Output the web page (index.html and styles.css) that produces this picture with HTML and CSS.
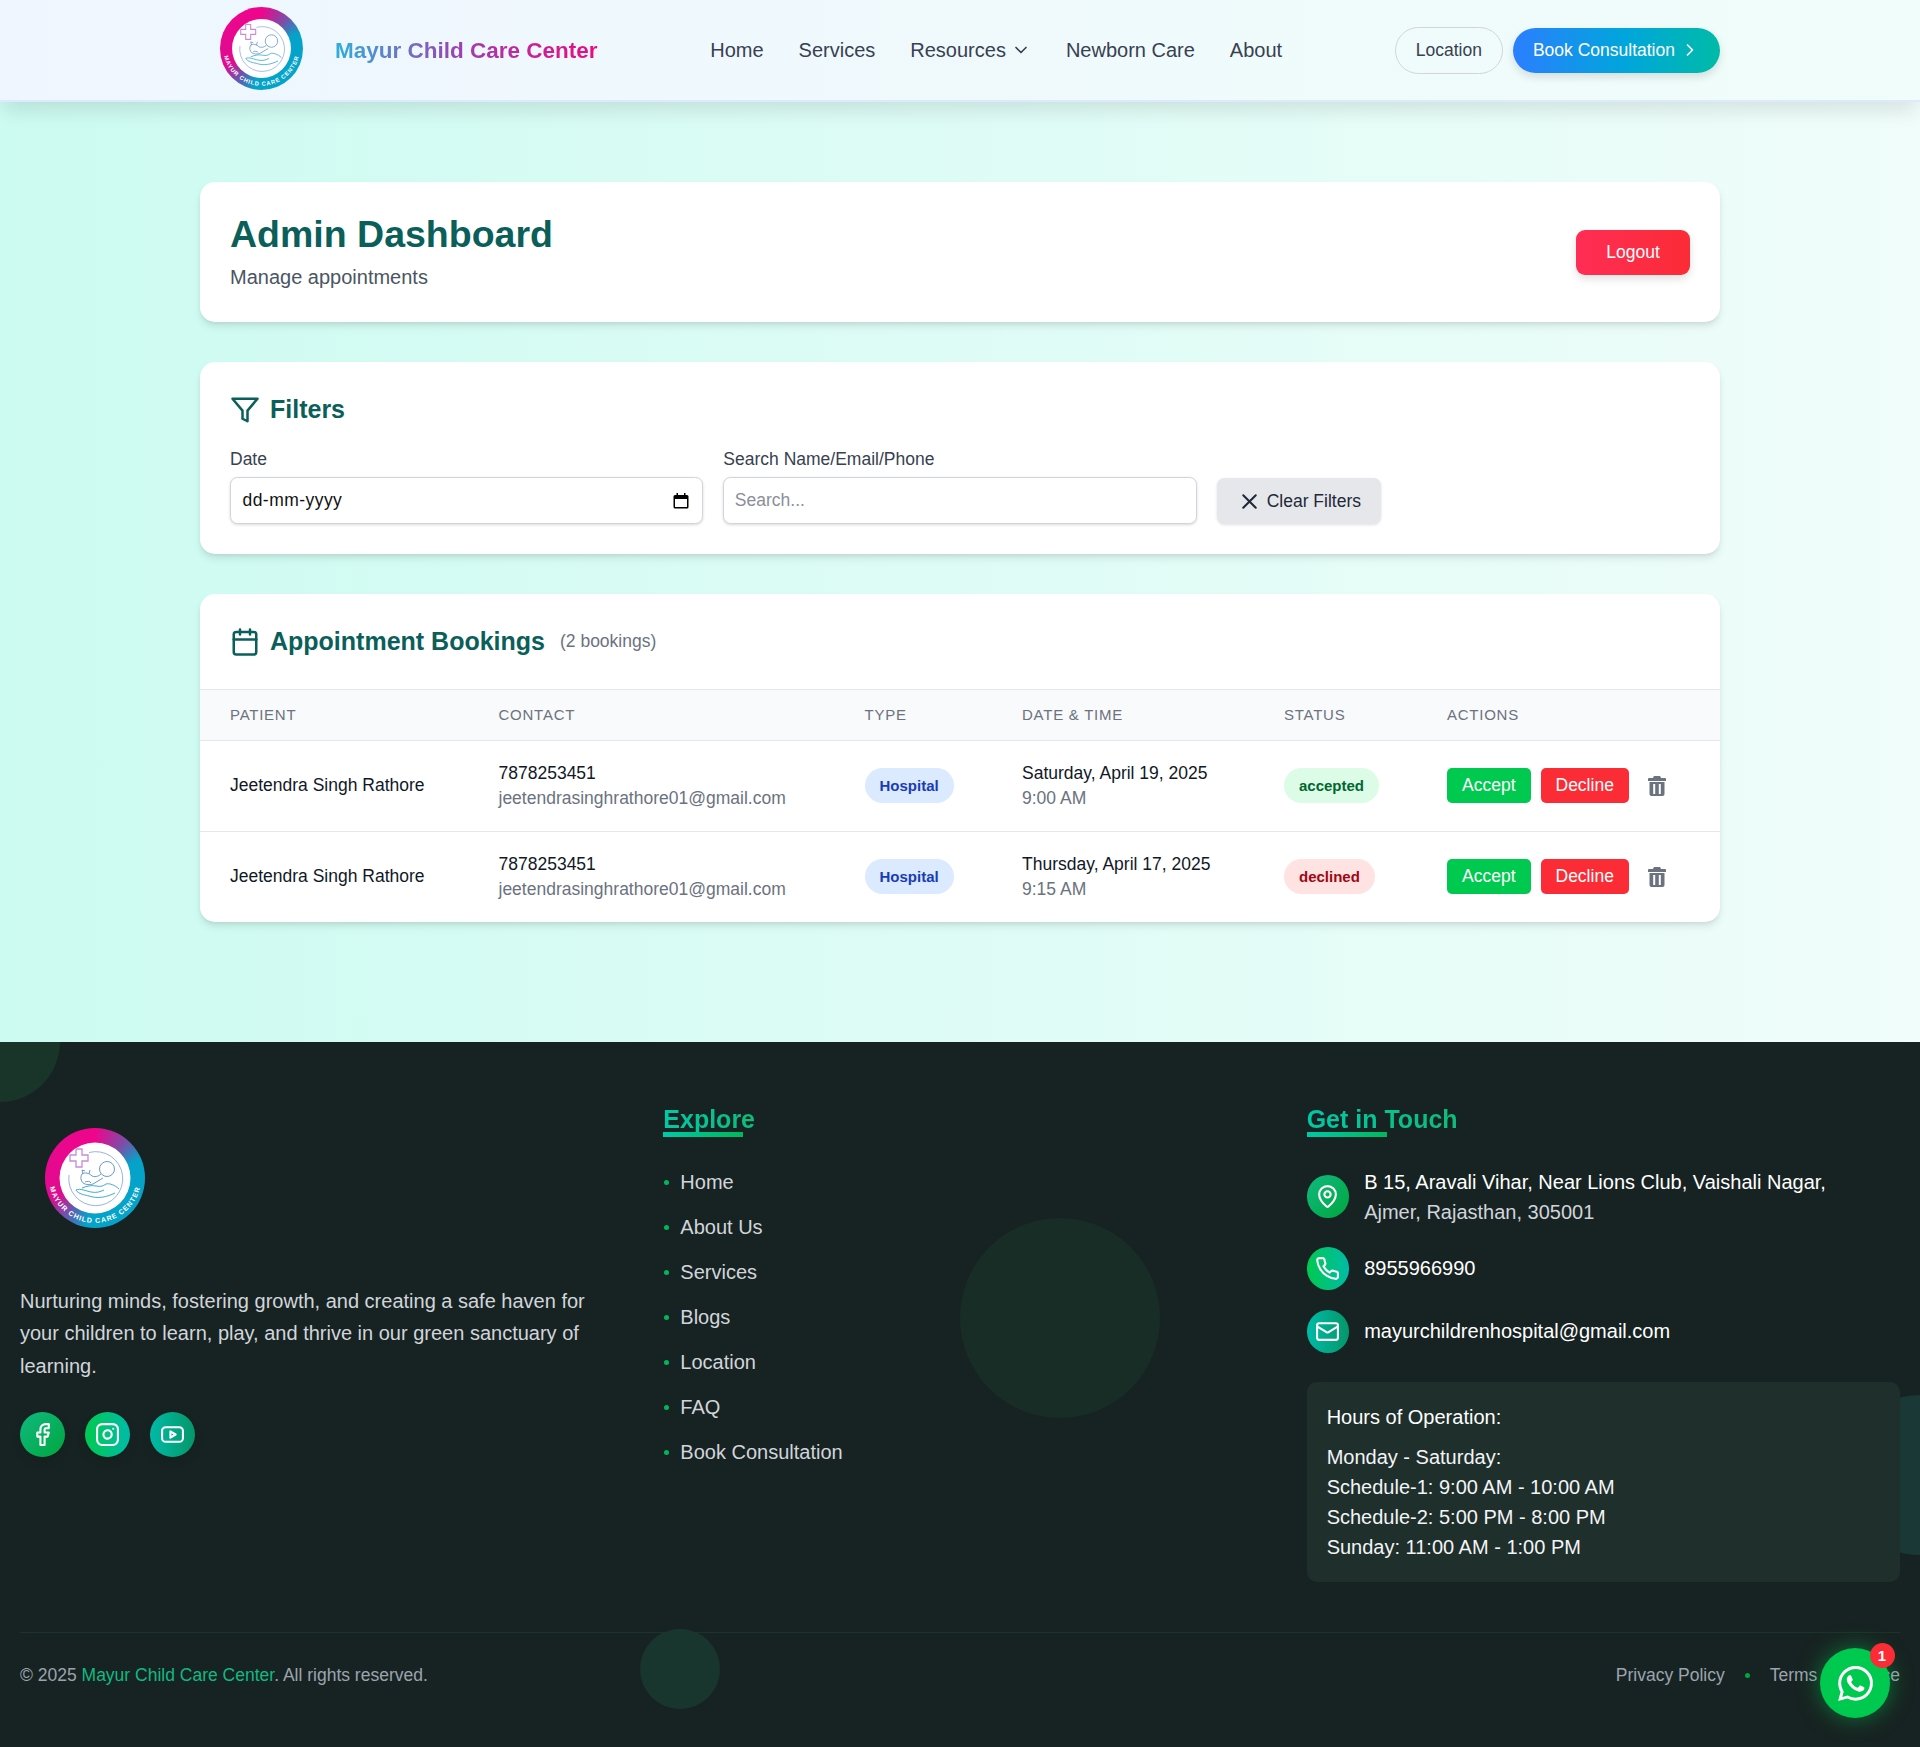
FILE: index.html
```html
<!doctype html>
<html lang="en-US">

<head>
    <meta charset="utf-8" />
    <title>Admin Dashboard - Mayur Child Care Center</title>

    <link rel="stylesheet" href="styles.css">
</head>

<body>
    <svg class="sprite" width="0" height="0">
        <symbol id="logo-art" viewBox="0 0 100 100">
            <circle cx="50" cy="50" r="35.5" fill="#fff" />
            <path d="M44 24.500A27 27 0 1 1 24 47" fill="none" stroke="#7f9fd6" stroke-width=".8" />
            <path d="M31 21h6v6h6v6h-6v6h-6v-6h-6v-6h6z" fill="#fff" stroke="#c98ad6" stroke-width="1.300" />
            <g fill="none" stroke="#5a8fc8" stroke-width=".9">
                <circle cx="62" cy="41" r="7.500" />
                <path d="M56 46c-3 3-7 3-9 2-3-3-7-4-10-2-2 3-1 7 1 9 3 2 7 2 10 1 3-2 7-4 10-6" />
                <path d="M38 46l-1-4 3 1M44 46l1-4" />
                <path d="M40 54c2-1 5-1 6 1" />
                <path d="M37 60c5-2 10-3 14-2 5 1 7 0 10-2 3-1 9 1 13 5" stroke="#2aa3c9" />
                <path d="M31 62c2 4 9 5 13 6 9 3 18 1 26-3" stroke="#2aa3c9" />
                <path d="M31 62c4-2 10 1 15 2 5 1 9 0 13-2" stroke="#2aa3c9" />
            </g>
            <path id="logo-arc" d="M4.500 58A46.500 46.500 0 0 0 95.500 58" fill="none" />
            <text class="logo-text">
                <textPath href="#logo-arc" startOffset="50%" text-anchor="middle">MAYUR CHILD CARE CENTER</textPath>
            </text>
        </symbol>
    </svg>

    <header class="site-header">
        <div class="header-inner">
            <a class="brand" href="#">
                <span class="logo logo-small"><svg viewBox="0 0 100 100"><use href="#logo-art" /></svg></span>
                <span class="brand-name">Mayur Child Care Center</span>
            </a>
            <nav class="main-nav">
                <a href="#">Home</a>
                <a href="#">Services</a>
                <a href="#" class="has-menu">Resources
                    <svg class="icon-chevron" viewBox="0 0 24 24"><path d="m6 9 6 6 6-6" /></svg>
                </a>
                <a href="#">Newborn Care</a>
                <a href="#">About</a>
            </nav>
            <div class="header-actions">
                <a href="#" class="btn-location">Location</a>
                <a href="#" class="btn-book">Book Consultation
                    <svg class="icon-chevron" viewBox="0 0 24 24"><path d="m9 18 6-6-6-6" /></svg>
                </a>
            </div>
        </div>
    </header>

    <main class="page">
        <section class="card title-card">
            <div>
                <h1>Admin Dashboard</h1>
                <p>Manage appointments</p>
            </div>
            <button class="btn-logout">Logout</button>
        </section>

        <section class="card filter-card">
            <h2 class="card-title">
                <svg class="icon" viewBox="0 0 24 24"><polygon points="22 3 2 3 10 12.460 10 19 14 21 14 12.460 22 3" /></svg>
                Filters
            </h2>
            <div class="filter-grid">
                <div>
                    <label>Date</label>
                    <div class="field date-field">
                        <span>dd-mm-yyyy</span>
                        <svg class="date-icon" viewBox="0 0 16 16"><path fill-rule="evenodd" d="M3.500 0v2H2a1.500 1.500 0 0 0-1.500 1.500V14A1.500 1.500 0 0 0 2 15.500h12a1.500 1.500 0 0 0 1.500-1.500V3.500A1.500 1.500 0 0 0 14 2h-1.500V0H11v2H5V0zM2 6h12v8H2z" /></svg>
                    </div>
                </div>
                <div>
                    <label for="search">Search Name/Email/Phone</label>
                    <input class="field" id="search" type="text" placeholder="Search...">
                </div>
                <div class="filter-action">
                    <button class="btn-clear">
                        <svg class="icon" viewBox="0 0 24 24"><path d="M18 6 6 18M6 6l12 12" /></svg>
                        Clear Filters
                    </button>
                </div>
            </div>
        </section>

        <section class="card bookings-card">
            <div class="bookings-head">
                <h2 class="card-title">
                    <svg class="icon" viewBox="0 0 24 24"><path d="M8 2v4M16 2v4" /><rect x="3" y="4" width="18" height="18" rx="2" /><path d="M3 10h18" /></svg>
                    Appointment Bookings
                </h2>
                <span class="count">(2 bookings)</span>
            </div>
            <table class="bookings">
                <colgroup>
                    <col class="col-patient">
                    <col class="col-contact">
                    <col class="col-type">
                    <col class="col-date">
                    <col class="col-status">
                    <col class="col-actions">
                </colgroup>
                <thead>
                    <tr>
                        <th>Patient</th>
                        <th>Contact</th>
                        <th>Type</th>
                        <th>Date &amp; Time</th>
                        <th>Status</th>
                        <th>Actions</th>
                    </tr>
                </thead>
                <tbody>
                    <tr>
                        <td>Jeetendra Singh Rathore</td>
                        <td>7878253451<span class="sub">jeetendrasinghrathore01@gmail.com</span></td>
                        <td><span class="pill pill-type">Hospital</span></td>
                        <td>Saturday, April 19, 2025<span class="sub">9:00 AM</span></td>
                        <td><span class="pill pill-accepted">accepted</span></td>
                        <td>
                            <div class="row-actions">
                                <button class="btn-accept">Accept</button>
                                <button class="btn-decline">Decline</button>
                                <svg class="icon-trash" viewBox="0 0 18 20"><path fill-rule="evenodd" d="M6.500 0h5a1 1 0 0 1 1 .8L13 2h4a1 1 0 0 1 1 1v2H0V3a1 1 0 0 1 1-1h4l.5-1.200a1 1 0 0 1 1-.8zM1.500 6h15v12a2 2 0 0 1-2 2h-11a2 2 0 0 1-2-2zM5.200 8v10h2V8zm5.600 0v10h2V8z" /></svg>
                            </div>
                        </td>
                    </tr>
                    <tr>
                        <td>Jeetendra Singh Rathore</td>
                        <td>7878253451<span class="sub">jeetendrasinghrathore01@gmail.com</span></td>
                        <td><span class="pill pill-type">Hospital</span></td>
                        <td>Thursday, April 17, 2025<span class="sub">9:15 AM</span></td>
                        <td><span class="pill pill-declined">declined</span></td>
                        <td>
                            <div class="row-actions">
                                <button class="btn-accept">Accept</button>
                                <button class="btn-decline">Decline</button>
                                <svg class="icon-trash" viewBox="0 0 18 20"><path fill-rule="evenodd" d="M6.500 0h5a1 1 0 0 1 1 .8L13 2h4a1 1 0 0 1 1 1v2H0V3a1 1 0 0 1 1-1h4l.5-1.200a1 1 0 0 1 1-.8zM1.500 6h15v12a2 2 0 0 1-2 2h-11a2 2 0 0 1-2-2zM5.200 8v10h2V8zm5.600 0v10h2V8z" /></svg>
                            </div>
                        </td>
                    </tr>
                </tbody>
            </table>
        </section>
    </main>

    <footer class="site-footer">
        <span class="blob blob-corner"></span>
        <span class="blob blob-middle"></span>
        <span class="blob blob-right"></span>
        <span class="blob blob-bottom"></span>

        <div class="footer-grid">
            <div>
                <span class="logo logo-large"><svg viewBox="0 0 100 100"><use href="#logo-art" /></svg></span>
                <p class="footer-about">Nurturing minds, fostering growth, and creating a safe haven for your children to learn, play, and thrive in our green sanctuary of learning.</p>
                <div class="socials">
                    <a href="#" class="round round-a">
                        <svg class="icon" viewBox="0 0 24 24"><path d="M18 2h-3a5 5 0 0 0-5 5v3H7v4h3v8h4v-8h3l1-4h-4V7a1 1 0 0 1 1-1h3z" /></svg>
                    </a>
                    <a href="#" class="round round-b">
                        <svg class="icon" viewBox="0 0 24 24"><rect x="2" y="2" width="20" height="20" rx="5" /><path d="M16 11.370A4 4 0 1 1 12.630 8 4 4 0 0 1 16 11.370zM17.500 6.500h.01" /></svg>
                    </a>
                    <a href="#" class="round round-c">
                        <svg class="icon" viewBox="0 0 24 24"><rect x="2" y="5" width="20" height="14" rx="3.500" /><path d="m10 9 5 3-5 3z" /></svg>
                    </a>
                </div>
            </div>

            <div>
                <h3 class="footer-title">Explore</h3>
                <ul class="footer-links">
                    <li><a href="#">Home</a></li>
                    <li><a href="#">About Us</a></li>
                    <li><a href="#">Services</a></li>
                    <li><a href="#">Blogs</a></li>
                    <li><a href="#">Location</a></li>
                    <li><a href="#">FAQ</a></li>
                    <li><a href="#">Book Consultation</a></li>
                </ul>
            </div>

            <div>
                <h3 class="footer-title">Get in Touch</h3>
                <div class="contact-row">
                    <span class="round round-a">
                        <svg class="icon" viewBox="0 0 24 24"><path d="M20 10c0 5-5.500 10.200-7.400 11.800a1 1 0 0 1-1.200 0C9.500 20.200 4 15 4 10a8 8 0 0 1 16 0" /><circle cx="12" cy="10" r="3" /></svg>
                    </span>
                    <p>B 15, Aravali Vihar, Near Lions Club, Vaishali Nagar,<br><span class="muted">Ajmer, Rajasthan, 305001</span></p>
                </div>
                <div class="contact-row">
                    <span class="round round-b">
                        <svg class="icon" viewBox="0 0 24 24"><path d="M22 16.920v3a2 2 0 0 1-2.180 2 19.790 19.790 0 0 1-8.630-3.070 19.500 19.500 0 0 1-6-6 19.790 19.790 0 0 1-3.070-8.670A2 2 0 0 1 4.110 2h3a2 2 0 0 1 2 1.720c.13.960.36 1.900.7 2.810a2 2 0 0 1-.45 2.110L8.090 9.910a16 16 0 0 0 6 6l1.270-1.270a2 2 0 0 1 2.110-.45c.91.340 1.850.570 2.810.7A2 2 0 0 1 22 16.920z" /></svg>
                    </span>
                    <p>8955966990</p>
                </div>
                <div class="contact-row">
                    <span class="round round-c">
                        <svg class="icon" viewBox="0 0 24 24"><rect x="2" y="4" width="20" height="16" rx="2" /><path d="m22 7-8.970 5.700a1.940 1.940 0 0 1-2.060 0L2 7" /></svg>
                    </span>
                    <p>mayurchildrenhospital@gmail.com</p>
                </div>
                <div class="hours">
                    <h4>Hours of Operation:</h4>
                    <p>Monday - Saturday:</p>
                    <p>Schedule-1: 9:00 AM - 10:00 AM</p>
                    <p>Schedule-2: 5:00 PM - 8:00 PM</p>
                    <p>Sunday: 11:00 AM - 1:00 PM</p>
                </div>
            </div>
        </div>

        <div class="footer-bottom">
            <p>&copy; 2025 <a href="#">Mayur Child Care Center</a>. All rights reserved.</p>
            <div class="legal">
                <a href="#">Privacy Policy</a>
                <span class="dot"></span>
                <a href="#">Terms of Service</a>
            </div>
        </div>
    </footer>

    <a href="#" class="whatsapp">
        <svg viewBox="0 0 24 24"><path d="M17.472 14.382c-.297-.149-1.758-.867-2.03-.967-.273-.099-.471-.148-.67.15-.197.297-.767.966-.94 1.164-.173.199-.347.223-.644.075-.297-.15-1.255-.463-2.390-1.475-.883-.788-1.480-1.761-1.653-2.059-.173-.297-.018-.458.130-.606.134-.133.298-.347.446-.520.149-.174.198-.298.298-.497.099-.198.050-.371-.025-.520-.075-.149-.669-1.612-.916-2.207-.242-.579-.487-.5-.669-.510-.173-.008-.371-.010-.570-.010-.198 0-.520.074-.792.372-.272.297-1.040 1.016-1.040 2.479 0 1.462 1.065 2.875 1.213 3.074.149.198 2.096 3.2 5.077 4.487.709.306 1.262.489 1.694.625.712.227 1.360.195 1.871.118.571-.085 1.758-.719 2.006-1.413.248-.694.248-1.289.173-1.413-.074-.124-.272-.198-.570-.347m-5.421 7.403h-.004a9.870 9.870 0 0 1-5.031-1.378l-.361-.214-3.741.982.998-3.648-.235-.374a9.860 9.860 0 0 1-1.510-5.260c.001-5.450 4.436-9.884 9.888-9.884 2.640 0 5.122 1.030 6.988 2.898a9.825 9.825 0 0 1 2.893 6.994c-.003 5.450-4.437 9.884-9.885 9.884m8.413-18.297A11.815 11.815 0 0 0 12.050 0C5.495 0 .16 5.335.157 11.892c0 2.096.547 4.142 1.588 5.945L.057 24l6.305-1.654a11.882 11.882 0 0 0 5.683 1.448h.005c6.554 0 11.890-5.335 11.893-11.893a11.821 11.821 0 0 0-3.480-8.413Z" /></svg>
        <span class="badge">1</span>
    </a>
</body>

</html>
```

FILE: styles.css
```css
* {
    box-sizing: border-box;
}

body {
    margin: 0;
    font-family: "Liberation Sans", Arial, sans-serif;
    font-size: 20px;
    color: #111827;
    background: linear-gradient(to right, #ccfbf1, #f0fdfa);
}

a {
    color: inherit;
    text-decoration: none;
}

h1,
h2,
h3,
h4,
p,
ul {
    margin: 0;
    padding: 0;
}

button {
    font-family: inherit;
    border: 0;
}

.sprite {
    position: absolute;
}

.icon {
    width: 30px;
    height: 30px;
    flex: none;
    fill: none;
    stroke: currentColor;
    stroke-width: 2;
    stroke-linecap: round;
    stroke-linejoin: round;
}

.icon-chevron {
    width: 20px;
    height: 20px;
    fill: none;
    stroke: currentColor;
    stroke-width: 2;
    stroke-linecap: round;
    stroke-linejoin: round;
}

/* logo */
.logo {
    display: block;
    flex: none;
    border-radius: 50%;
    background: conic-gradient(#f0048c 0deg, #7a4fa8 40deg, #05a3c9 68deg, #05a3c9 190deg, #5f5db0 215deg, #e00b90 245deg, #f0048c 360deg);
}

.logo svg {
    display: block;
    width: 100%;
    height: 100%;
}

.logo-text {
    font-size: 7px;
    font-weight: 700;
    letter-spacing: 1px;
    fill: #fff;
}

.logo-small {
    width: 83px;
    height: 83px;
    margin: -3px 0 0 20px;
}

.logo-large {
    width: 100px;
    height: 100px;
    margin: 26px 0 57px 25px;
}

/* header */
.site-header {
    height: 102px;
    background: linear-gradient(to right, #eff6ff, #f0fdfa);
    border-bottom: 2px solid #dbeafe;
    box-shadow: 0 12px 18px -3px rgba(0, 0, 0, .1);
    position: relative;
}

.header-inner {
    width: 1520px;
    height: 100px;
    margin: 0 auto;
    display: flex;
    align-items: center;
    justify-content: space-between;
}

.brand {
    display: flex;
    align-items: center;
    gap: 32px;
}

.brand-name {
    margin-top: 1px;
    font-size: 22.5px;
    font-weight: 700;
    background: linear-gradient(to right, #2fb0d9, #a23bb0 50%, #ec0a80);
    -webkit-background-clip: text;
    background-clip: text;
    color: transparent;
}

.main-nav {
    display: flex;
    align-items: center;
    gap: 35px;
    color: #374151;
}

.has-menu {
    display: flex;
    align-items: center;
    gap: 5px;
}

.header-actions {
    display: flex;
    align-items: center;
    gap: 10px;
    font-size: 17.5px;
}

.btn-location {
    height: 47px;
    padding: 0 20px;
    display: flex;
    align-items: center;
    color: #374151;
    border: 1px solid #d1d5db;
    border-radius: 24px;
}

.btn-book {
    height: 45px;
    padding: 0 20px;
    display: flex;
    align-items: center;
    gap: 5px;
    color: #fff;
    font-weight: 500;
    background: linear-gradient(to right, #2b7fff, #00a6db 55%, #00bba7);
    border-radius: 23px;
    box-shadow: 0 4px 8px rgba(0, 0, 0, .12);
}

/* main */
.page {
    width: 1520px;
    margin: 0 auto;
    padding: 80px 0 120px;
    display: flex;
    flex-direction: column;
    gap: 40px;
}

.card {
    background: #fff;
    border-radius: 15px;
    box-shadow: 0 5px 8px -1px rgba(0, 0, 0, .1), 0 2px 5px -2px rgba(0, 0, 0, .1);
}

.title-card {
    padding: 30px;
    display: flex;
    align-items: center;
    justify-content: space-between;
}

.title-card h1 {
    font-size: 37.5px;
    line-height: 45px;
    margin-bottom: 5px;
    color: #0b5f5a;
}

.title-card p {
    line-height: 30px;
    color: #4b5563;
}

.btn-logout {
    width: 114px;
    height: 45px;
    font-size: 17.5px;
    color: #fff;
    background: linear-gradient(to right, #ff2d55, #fb2c36);
    border-radius: 9px;
    box-shadow: 0 4px 8px rgba(0, 0, 0, .12);
}

.filter-card {
    padding: 30px;
}

.card-title {
    display: flex;
    align-items: center;
    gap: 10px;
    font-size: 25px;
    line-height: 35px;
    color: #0b5f5a;
}

.filter-card .card-title {
    margin-bottom: 20px;
}

.filter-grid {
    display: grid;
    grid-template-columns: repeat(3, 1fr);
    gap: 20px;
}

.filter-grid label {
    display: block;
    font-size: 17.5px;
    line-height: 25px;
    margin-bottom: 5px;
    color: #374151;
}

.field {
    display: block;
    width: 100%;
    height: 47px;
    padding: 0 10.5px;
    font-family: inherit;
    font-size: 17.5px;
    color: #111;
    background: #fff;
    border: 1px solid #d1d5db;
    border-radius: 7.5px;
    box-shadow: 0 1px 3px rgba(0, 0, 0, .15);
}

.field::placeholder {
    color: #8a8f98;
}

.date-field {
    display: flex;
    align-items: center;
    justify-content: space-between;
    padding-left: 11.5px;
    letter-spacing: .45px;
}

.date-icon {
    width: 16px;
    height: 16px;
    margin-right: 2.5px;
}

.filter-action {
    display: flex;
    align-items: flex-end;
}

.btn-clear {
    height: 46px;
    padding: 0 20px;
    display: flex;
    align-items: center;
    gap: 5px;
    font-size: 17.5px;
    color: #1f2937;
    background: #e5e7eb;
    border-radius: 7.5px;
    box-shadow: 0 1px 3px rgba(0, 0, 0, .12);
}

.btn-clear .icon {
    width: 25px;
    height: 25px;
}

.bookings-head {
    height: 95px;
    padding: 0 30px;
    display: flex;
    align-items: center;
    gap: 15px;
}

.count {
    font-size: 17.5px;
    color: #6b7280;
}

.bookings {
    width: 100%;
    table-layout: fixed;
    border-collapse: collapse;
    font-size: 17.5px;
}

.col-patient { width: 268.5px; }
.col-contact { width: 366px; }
.col-type { width: 157.5px; }
.col-date { width: 262px; }
.col-status { width: 163px; }
.col-actions { width: 303px; }

.bookings th {
    height: 51px;
    padding: 0 0 2px 30px;
    text-align: left;
    font-size: 15px;
    font-weight: 400;
    letter-spacing: .75px;
    text-transform: uppercase;
    color: #6b7280;
    background: #f9fafb;
    border-top: 1px solid #e5e7eb;
    border-bottom: 1px solid #e5e7eb;
}

.bookings td {
    height: 91px;
    padding: 0 0 0 30px;
    line-height: 25px;
    white-space: nowrap;
    border-bottom: 1px solid #e5e7eb;
}

.bookings tbody tr:first-child td {
    padding-bottom: 1px;
}

.bookings tr:last-child td {
    height: 90px;
    border-bottom: 0;
}

.sub {
    display: block;
    color: #6b7280;
}

.pill {
    display: block;
    width: fit-content;
    height: 35px;
    padding: 0 15px;
    line-height: 35px;
    font-size: 15px;
    font-weight: 700;
    border-radius: 18px;
}

.pill-type {
    color: #193cb8;
    background: #dbeafe;
}

.pill-accepted {
    color: #016630;
    background: #dcfce7;
}

.pill-declined {
    color: #9f0712;
    background: #ffe2e2;
}

.row-actions {
    display: flex;
    align-items: center;
    gap: 10px;
}

.row-actions button {
    height: 35px;
    padding: 0 15px;
    font-size: 17.5px;
    color: #fff;
    border-radius: 5px;
}

.btn-accept {
    background: #00c950;
}

.btn-decline {
    background: #fb2c36;
}

.icon-trash {
    width: 18px;
    height: 20px;
    margin-left: 9px;
    fill: #6b7280;
}

/* footer */
.site-footer {
    position: relative;
    overflow: hidden;
    height: 705px;
    padding: 60px 20px 0;
    color: #d1d5db;
    background: #172322;
}

.blob {
    position: absolute;
    border-radius: 50%;
    background: #193428;
}

.blob-corner {
    width: 120px;
    height: 120px;
    left: -60px;
    top: -60px;
}

.blob-middle {
    width: 200px;
    height: 200px;
    left: 960px;
    top: 176px;
    opacity: .6;
}

.blob-right {
    width: 160px;
    height: 160px;
    left: 1840px;
    top: 353px;
    background: #193836;
}

.blob-bottom {
    width: 80px;
    height: 80px;
    left: 640px;
    top: 587px;
    background: #19362e;
}

.footer-grid {
    position: relative;
    display: grid;
    grid-template-columns: repeat(3, 1fr);
    gap: 50px;
}

.footer-about {
    line-height: 32.5px;
}

.socials {
    display: flex;
    gap: 20px;
    margin-top: 30px;
}

.round {
    display: flex;
    align-items: center;
    justify-content: center;
    flex: none;
    border-radius: 50%;
    color: #fff;
}

.socials .round {
    width: 45px;
    height: 45px;
    box-shadow: 0 5px 10px rgba(0, 0, 0, .1);
}

.round .icon {
    width: 25px;
    height: 25px;
}

.round-a {
    background: linear-gradient(135deg, #10b981, #00a63e);
}

.round-b {
    background: linear-gradient(to right, #00c950, #00bba7);
}

.round-c {
    background: linear-gradient(to right, #00bba7, #059669);
}

.footer-title {
    position: relative;
    width: fit-content;
    font-size: 25px;
    line-height: 35px;
    background: linear-gradient(to right, #00c9a7, #10bb78);
    -webkit-background-clip: text;
    background-clip: text;
    color: transparent;
    margin-bottom: 30px;
}

.footer-title::after {
    content: "";
    position: absolute;
    left: 0;
    bottom: 0;
    width: 80px;
    height: 5px;
    background: linear-gradient(to right, #00c9a7, #00b85c);
}

.footer-links {
    list-style: none;
}

.footer-links li {
    position: relative;
    line-height: 30px;
    margin-bottom: 15px;
    padding-left: 17px;
}

.footer-links li::before {
    content: "";
    position: absolute;
    left: 1px;
    top: 13px;
    width: 5px;
    height: 5px;
    border-radius: 50%;
    background: #00b85c;
}

.contact-row {
    display: flex;
    align-items: center;
    gap: 15px;
    margin-bottom: 20.5px;
    line-height: 30px;
    color: #fff;
}

.contact-row .round {
    width: 42.5px;
    height: 42.5px;
}

.muted {
    color: #d1d5db;
}

.hours {
    margin-top: 29px;
    padding: 20px;
    line-height: 30px;
    color: #f3f4f6;
    background: #1e2f2c;
    border-radius: 10px;
    position: relative;
}

.hours h4 {
    font-size: 20px;
    font-weight: 400;
    margin-bottom: 10px;
    color: #fff;
}

.footer-bottom {
    position: relative;
    margin-top: 50px;
    padding-top: 30px;
    display: flex;
    justify-content: space-between;
    font-size: 17.5px;
    line-height: 25px;
    color: #9ca3af;
    border-top: 1px solid #1b3529;
}

.footer-bottom p a {
    color: #10b981;
}

.legal {
    display: flex;
    align-items: center;
    gap: 20px;
}

.dot {
    width: 5px;
    height: 5px;
    border-radius: 50%;
    background: #00a63e;
}

/* floating chat button */
.whatsapp {
    position: fixed;
    right: 30px;
    bottom: 29px;
    width: 70px;
    height: 70px;
    display: flex;
    align-items: center;
    justify-content: center;
    border-radius: 50%;
    background: #00c950;
    box-shadow: 0 0 22px rgba(0, 201, 80, .5);
}

.whatsapp svg {
    width: 35px;
    height: 35px;
    fill: #fff;
}

.badge {
    position: absolute;
    top: -5px;
    right: -4.5px;
    width: 25px;
    height: 25px;
    font-size: 15px;
    font-weight: 700;
    line-height: 25px;
    text-align: center;
    color: #fff;
    background: #fb2c36;
    border-radius: 50%;
}
```
